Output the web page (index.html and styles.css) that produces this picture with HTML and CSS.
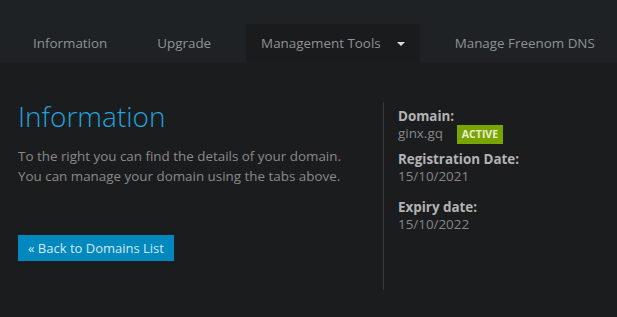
FILE: index.html
```html
<!DOCTYPE html>
<html>
<head>
    <title>Domain Details</title>
    <link rel="stylesheet" href="styles.css">
</head>
<body>
    <div class="tabs">
        <a class="tab" href="#">Information</a>
        <a class="tab" href="#">Upgrade</a>
        <a class="tab active" href="#">Management Tools <span class="caret"></span></a>
        <a class="tab" href="#">Manage Freenom DNS</a>
    </div>

    <div class="content">
        <div class="intro">
            <h1>Information</h1>
            <p>To the right you can find the details of your domain.<br>
            You can manage your domain using the tabs above.</p>
            <a class="btn" href="#">&laquo; Back to Domains List</a>
        </div>
        <div class="details">
            <div class="label">Domain:</div>
            <div class="value-row">
                <span class="value">ginx.gq</span>
                <span class="badge">Active</span>
            </div>
            <div class="label">Registration Date:</div>
            <div class="value">15/10/2021</div>
            <div class="label spaced">Expiry date:</div>
            <div class="value">15/10/2022</div>
        </div>
    </div>
</body>
</html>
```

FILE: styles.css
```css
body {
    margin: 0;
    background-color: #1b1c1e;
    font-family: "Open Sans", Arial, sans-serif;
    font-size: 13.4px;
    height: 100vh;
}

.tabs {
    display: flex;
    gap: 20px;
    background-color: #1f2224;
    padding: 24px 0 0 18px;
    height: 38px;
    overflow: hidden;
}

.tab {
    display: flex;
    align-items: center;
    height: 38px;
    padding: 0 15px;
    color: #8e9294;
    text-decoration: none;
    white-space: nowrap;
}

.tab.active {
    background-color: #1a1b1d;
}

.caret {
    display: inline-block;
    width: 0;
    height: 0;
    margin-left: 16px;
    margin-top: 2px;
    border-left: 4px solid transparent;
    border-right: 4px solid transparent;
    border-top: 4px solid #dcdcdc;
}

.content {
    display: flex;
    padding: 40px 0 0 18px;
}

.intro {
    width: 365px;
}

h1 {
    margin: -4px 0 0 0;
    font-size: 28px;
    font-weight: 300;
    line-height: 36px;
    color: #22a2dc;
}

p {
    margin: 12px 0 0 0;
    line-height: 20px;
    color: #8a8a8a;
}

.btn {
    display: inline-block;
    margin-top: 49px;
    padding: 0 10px;
    height: 26px;
    line-height: 26px;
    font-size: 13px;
    background-color: #0088bf;
    color: #d6e8f0;
    text-decoration: none;
}

.details {
    border-left: 1px solid #3a3a3b;
    height: 188px;
    padding: 6px 0 0 14px;
    box-sizing: border-box;
    line-height: 17px;
}

.label {
    font-weight: bold;
    color: #b3b3b3;
}

.label.spaced {
    margin-top: 14px;
}

.value {
    color: #878787;
}

.value-row {
    display: flex;
    align-items: flex-start;
    margin-bottom: 7px;
}

.badge {
    margin-left: 14px;
    height: 19px;
    line-height: 19px;
    padding: 0 5px;
    background-color: #79a500;
    color: #e6efd8;
    font-size: 10.5px;
    font-weight: bold;
    text-transform: uppercase;
}
```
